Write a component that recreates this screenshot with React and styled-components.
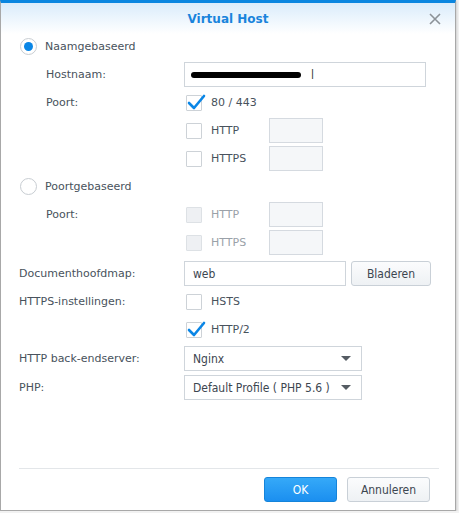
import styled, { createGlobalStyle } from "styled-components";

const GlobalStyle = createGlobalStyle`
  body {
    margin: 0;
    background: #f2f2f2;
    font-family: "DejaVu Sans", Verdana, sans-serif;
  }
`;

const fieldFont = `"DejaVu Sans Condensed", "DejaVu Sans", sans-serif`;

function CheckMark() {
  return (
    <svg width="20" height="18" viewBox="0 0 20 18">
      <path
        d="M3 10 L8 15 L18 3"
        fill="none"
        stroke="#0a86e6"
        strokeWidth="2.6"
        strokeLinecap="round"
        strokeLinejoin="round"
      />
    </svg>
  );
}

function Check({ checked, disabled, children }) {
  return (
    <CheckWrap>
      <Box $disabled={disabled}>{checked && <CheckMark />}</Box>
      <CheckText $disabled={disabled}>{children}</CheckText>
    </CheckWrap>
  );
}

function Radio({ checked, children }) {
  return (
    <RadioRow>
      <RadioCircle $checked={checked} />
      <span>{children}</span>
    </RadioRow>
  );
}

function App() {
  return (
    <>
      <GlobalStyle />
      <Dialog>
        <Header>
          <Title>Virtual Host</Title>
          <Close>
            <svg width="12" height="12" viewBox="0 0 12 12">
              <path d="M1 1 L11 11 M11 1 L1 11" stroke="#8c9298" strokeWidth="1.6" />
            </svg>
          </Close>
        </Header>

        <Body>
          <Radio checked>Naamgebaseerd</Radio>

          <Row>
            <Label $indent>Hostnaam:</Label>
            <TextInput $width={242}>
              <Redacted />
              <Faded>l</Faded>
            </TextInput>
          </Row>

          <Row>
            <Label $indent>Poort:</Label>
            <Check checked>80 / 443</Check>
          </Row>

          <Row>
            <Label $indent />
            <Check>HTTP</Check>
            <SmallBox />
          </Row>

          <Row>
            <Label $indent />
            <Check>HTTPS</Check>
            <SmallBox />
          </Row>

          <Radio>Poortgebaseerd</Radio>

          <Row>
            <Label $indent>Poort:</Label>
            <Check disabled>HTTP</Check>
            <SmallBox />
          </Row>

          <Row>
            <Label $indent />
            <Check disabled>HTTPS</Check>
            <SmallBox />
          </Row>

          <Row $top={3}>
            <Label>Documenthoofdmap:</Label>
            <TextInput $width={162}>web</TextInput>
            <Button>Bladeren</Button>
          </Row>

          <Row>
            <Label>HTTPS-instellingen:</Label>
            <Check>HSTS</Check>
          </Row>

          <Row>
            <Label />
            <Check checked>HTTP/2</Check>
          </Row>

          <Row $top={1}>
            <Label>HTTP back-endserver:</Label>
            <Select>
              <span>Nginx</span>
              <Arrow />
            </Select>
          </Row>

          <Row $top={1}>
            <Label>PHP:</Label>
            <Select>
              <span>Default Profile ( PHP 5.6 )</span>
              <Arrow />
            </Select>
          </Row>
        </Body>

        <Footer>
          <Button $primary $width={73}>OK</Button>
          <Button $width={83}>Annuleren</Button>
        </Footer>
      </Dialog>
    </>
  );
}

const Dialog = styled.div`
  width: 454px;
  height: 507px;
  background: #fff;
  border: 1px solid #a8a8a8;
  border-top: 3px solid #0a86e0;
  display: flex;
  flex-direction: column;
  box-shadow: 1px 1px 2px rgba(0, 0, 0, 0.15);
`;

const Header = styled.div`
  height: 31px;
  flex: none;
  display: flex;
  align-items: center;
  justify-content: center;
  position: relative;
  background: linear-gradient(#daecfb, #ffffff);
`;

const Title = styled.div`
  font-size: 12px;
  font-weight: bold;
  color: #1a84dc;
`;

const Close = styled.div`
  position: absolute;
  right: 14px;
  top: 10px;
  line-height: 0;
`;

const Body = styled.div`
  flex: 1;
  display: flex;
  flex-direction: column;
  gap: 3px;
  padding: 0 0 0 18px;
  font-size: 11px;
  color: #48525c;
`;

const RadioRow = styled.div`
  height: 25px;
  display: flex;
  align-items: center;
  gap: 8px;
  padding-left: 1px;
`;

const RadioCircle = styled.span`
  width: 17px;
  height: 17px;
  box-sizing: border-box;
  border-radius: 50%;
  border: 1px solid #c8cdd2;
  background: #fff;
  display: flex;
  align-items: center;
  justify-content: center;

  &::after {
    content: "";
    width: 9px;
    height: 9px;
    border-radius: 50%;
    background: ${(p) => (p.$checked ? "#0a86e6" : "transparent")};
  }
`;

const Row = styled.div`
  height: 25px;
  margin-top: ${(p) => p.$top || 0}px;
  display: flex;
  align-items: center;
`;

const Label = styled.div`
  width: ${(p) => (p.$indent ? 138 : 165)}px;
  padding-left: ${(p) => (p.$indent ? 27 : 0)}px;
  flex: none;
`;

const CheckWrap = styled.div`
  width: 83px;
  display: flex;
  align-items: center;
  gap: 9px;
  padding-left: 2px;
`;

const Box = styled.span`
  width: 16px;
  height: 16px;
  flex: none;
  box-sizing: border-box;
  border: 1px solid ${(p) => (p.$disabled ? "#dde1e5" : "#cdd2d7")};
  background: ${(p) => (p.$disabled ? "#eef0f3" : "#fff")};
  border-radius: 1px;
  position: relative;

  svg {
    position: absolute;
    left: -1px;
    top: -3px;
  }
`;

const CheckText = styled.span`
  color: ${(p) => (p.$disabled ? "#9aa1a8" : "#48525c")};
`;

const SmallBox = styled.div`
  width: 54px;
  height: 25px;
  box-sizing: border-box;
  border: 1px solid #d5dae0;
  background: #f5f7f9;
`;

const TextInput = styled.div`
  width: ${(p) => p.$width}px;
  height: 25px;
  box-sizing: border-box;
  border: 1px solid #cfd5db;
  padding: 0 8px;
  display: flex;
  align-items: center;
  font-family: ${fieldFont};
  font-size: 12px;
  color: #3c4650;
`;

const Redacted = styled.span`
  width: 110px;
  height: 6px;
  border-radius: 3px;
  background: #000;
  margin-left: -2px;
  margin-right: 10px;
`;

const Faded = styled.span`
  color: #444;
`;

const Select = styled.div`
  width: 178px;
  height: 25px;
  box-sizing: border-box;
  border: 1px solid #cfd5db;
  padding: 0 10px 0 8px;
  display: flex;
  align-items: center;
  justify-content: space-between;
  font-family: ${fieldFont};
  font-size: 12px;
  color: #3c4650;
`;

const Arrow = styled.span`
  width: 0;
  height: 0;
  border-left: 5px solid transparent;
  border-right: 5px solid transparent;
  border-top: 5px solid #555c63;
`;

const Button = styled.div`
  width: ${(p) => p.$width || 80}px;
  height: 25px;
  box-sizing: border-box;
  margin-left: ${(p) => (p.$primary ? 0 : 5)}px;
  border-radius: 3px;
  border: 1px solid ${(p) => (p.$primary ? "#1584da" : "#c9d0d7")};
  background: ${(p) =>
    p.$primary
      ? "linear-gradient(#35a9f8, #1b8ff0)"
      : "linear-gradient(#fbfcfd, #eef1f4)"};
  color: ${(p) => (p.$primary ? "#fff" : "#3c4650")};
  font-family: ${fieldFont};
  font-size: 12px;
  display: flex;
  align-items: center;
  justify-content: center;
`;

const Footer = styled.div`
  margin: 0 16px 0 18px;
  border-top: 1px solid #e3e6e9;
  padding: 8px 9px 8px 0;
  display: flex;
  justify-content: flex-end;
  gap: 5px;
`;

export default App;
